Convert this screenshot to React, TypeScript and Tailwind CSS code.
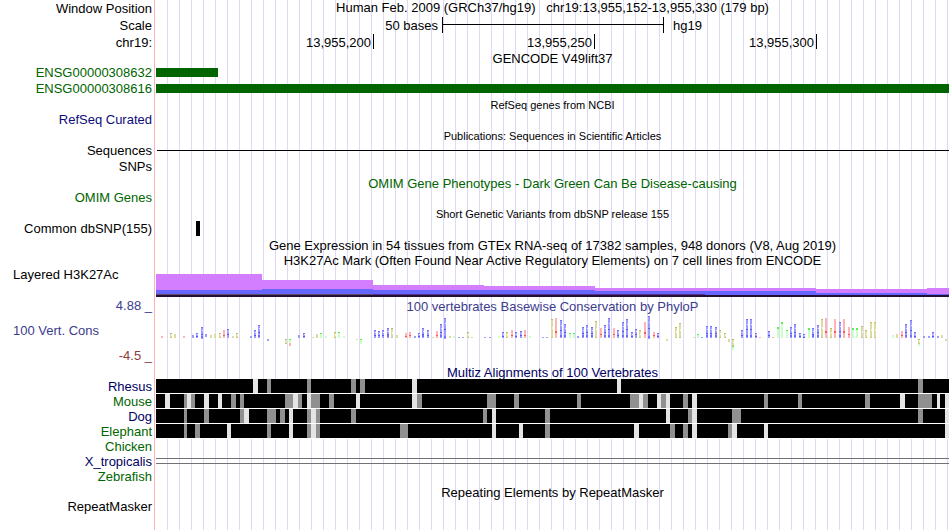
import type { ReactNode } from "react";

const GUIDES =
  "bg-[repeating-linear-gradient(90deg,transparent_0_11px,#dedaf6_11px_12px)]";

// Tracks are plotted in a coordinate space running from ORIGIN to ORIGIN + SPAN.
const ORIGIN = 156;
const SPAN = 793;

type RowProps = {
  height: string;
  label?: ReactNode;
  color?: string;
  align?: string;
  children?: ReactNode;
};

// Alignment of labels in the compact gene and variant tracks.
const RAISED = "pb-0.5";

function Row({ height, label, color = "text-black", align = "", children }: RowProps) {
  return (
    <div className={`flex ${height}`}>
      <div
        className={`mr-px flex w-[155px] shrink-0 flex-col justify-center border-r border-[#ffb4b4] pr-0.5 text-right ${align} ${color}`}
      >
        {label}
      </div>
      <div className={`min-w-0 flex-1 ${GUIDES}`}>{children}</div>
    </div>
  );
}

function Title({ children, className = "text-black" }: { children: ReactNode; className?: string }) {
  return (
    <h2 className={`flex h-full items-center justify-center whitespace-pre ${className}`}>
      {children}
    </h2>
  );
}

function SmallTitle({ children }: { children: ReactNode }) {
  return <Title className="pt-0.5 text-[11px] text-black">{children}</Title>;
}

const pct = (n: number) => `${(n / SPAN) * 100}%`;

const TICKS = [
  { text: "13,955,200", width: 218 },
  { text: "13,955,250", width: 221 },
  { text: "13,955,300", width: 222 },
];

type Band = [number, number, number, number, string];

const PURPLE = "#d37dff";
const BLUE = "#6666ff";
const DARK = "#231034";
const H3K27AC: Band[] = [
  [156, 274, 262, 290, PURPLE],
  [156, 290, 262, 294, BLUE],
  [262, 280, 373, 289, PURPLE],
  [262, 289, 373, 294, BLUE],
  [373, 285, 484, 290, PURPLE],
  [373, 290, 484, 294, BLUE],
  [484, 286, 595, 290, PURPLE],
  [484, 290, 595, 294, BLUE],
  [595, 288, 816, 291, PURPLE],
  [595, 291, 816, 295, BLUE],
  [816, 289, 927, 293, PURPLE],
  [816, 293, 927, 295, BLUE],
  [927, 288, 949, 294, PURPLE],
  [927, 294, 949, 295, BLUE],
  [156, 294, 373, 295, "#5c4a68"],
  [373, 294, 705, 295, "#58309c"],
  [156, 295, 949, 297, DARK],
];

// Conservation columns: base, x, top and optional bottom.
const CONS =
  "A161,336 C170,333 C174,334 A183,336 G192,335 G196,333 G201,327,339 G205,334,337 C210,335 C214,334 C219,333 A223,330 G227,329 C232,336 C236,333 G250,336 G254,330 G258,325 G267,339,341 C285,339,344 T289,339,343 A289,343,346 G298,335 G303,333 C312,337 C316,334 T320,333 T325,336 C334,332 T338,332 T343,336 C356,339,340 T360,339,344 " +
  "G374,330 G378,331 G382,330 G387,328 C391,328 C396,335 A405,333 A409,332 G414,336 G418,333 G422,328 G427,330 C432,337 A436,331 G440,324 G444,318,339 C449,336 T453,336 G458,337 G462,337 C467,332 C471,337 G484,337 G489,337 T498,336 G502,332 C506,332 A511,330 G515,332 G520,331 A524,330 T529,336 G542,337 G546,337 " +
  "C551,319 A555,318 G560,320 G564,324 T569,333 T573,333 G577,336 G582,327 G586,325 G591,327 C595,321 A600,328 G604,325 G608,318 A613,328 G617,330 G622,322 G626,319 G631,332 G635,329 C639,330 A644,322 G648,316,339 A653,332 G657,333 C666,339,341 C675,327 C679,323 C693,337 T697,334 G701,337 G706,326 G710,326 G715,327 C719,330 C724,333 C728,339,342 C732,339,346 T732,346,350 G741,330 G746,319 " +
  "G750,319 G755,333 A759,337 G768,331 A772,337 T777,327 T781,322 T786,330 G790,327 G794,324 G799,333 G803,334 T808,328 G812,328 G817,325 C821,319 A825,318 C830,328 A834,319 G839,322 A843,319 A848,327 T852,328 T856,328 C861,326 C865,330 C870,322 C874,322 T892,335 C896,334 A901,331 G905,324 G910,320 G914,332 C918,339,344 T918,344,346 G923,336 G928,336 G932,332 G937,336 C941,335 C945,339,341";

const COLUMNS = CONS.split(" ").map((entry) => {
  const [x, top, bottom = 338] = entry.slice(1).split(",").map(Number);
  return { base: entry[0], x, top, height: bottom - top };
});

function Column({ base, x, top, height }: { base: string; x: number; top: number; height: number }) {
  const mid = top + Math.floor(height / 2);
  if (base === "A") {
    return (
      <g>
        <rect x={x} y={top} width={2} height={height} fill="#ffb3b3" />
        {height > 4 && (
          <rect x={x} y={top + Math.floor(height * 0.65)} width={2} height={height > 12 ? 2 : 1} fill="#ff5555" />
        )}
      </g>
    );
  }
  if (base === "T") {
    return (
      <g>
        <rect x={x} y={top} width={2} height={height} fill="#c9ffc9" />
        {height > 3 && <rect x={x} y={top} width={2} height={height > 9 ? 2 : 1} fill="#55f055" />}
      </g>
    );
  }
  if (base === "C") {
    return (
      <g>
        <rect x={x} y={top} width={2} height={height} fill="#dcdca0" />
        {height > 4 && <rect x={x} y={top} width={2} height={1} fill="#bcbc60" />}
        {height > 4 && <rect x={x + 1} y={mid - 1} width={1} height={2} fill="#f6f6e6" />}
        {height > 4 && <rect x={x} y={top + height - 1} width={2} height={1} fill="#c8c878" />}
      </g>
    );
  }
  return (
    <g>
      <rect x={x} y={top} width={2} height={height} fill="#9d9dff" />
      {height > 3 && <rect x={x} y={top} width={2} height={1} fill="#7474fa" />}
      {height > 3 && <rect x={x + 1} y={top + Math.round(height / 4)} width={1} height={1} fill="#e6e6ff" />}
      {height > 3 && <rect x={x} y={mid + 1} width={2} height={1} fill="#5959f5" />}
      {height > 9 && <rect x={x} y={top + height - 3} width={2} height={2} fill="#7070fa" />}
    </g>
  );
}

type Species = { name: string; color: string; gray: string; light: string };

const GREEN = "text-[#006400]";
const NAVY = "text-[#000064]";

const SPECIES: Species[] = [
  {
    name: "Rhesus",
    color: NAVY,
    gray: "267-271 307-311 351-356 360-365 918-923",
    light: "253-258 412-417 617-621",
  },
  {
    name: "Mouse",
    color: GREEN,
    gray: "184-187 191-195 231-236 240-244 285-293 298-302 311-320 329-334 417-422 487-496 514-519 577-581 630-639 643-648 661-666 683-688 764-768 798-802 865-870 918-932",
    light: "165-170 187-191 204-209 218-222 293-298 307-311 356-360 412-417 639-643 657-661 666-670 692-697 900-905 937-940 945-949",
  },
  {
    name: "Dog",
    color: NAVY,
    gray: "184-187 204-209 240-244 267-276 280-285 307-311 316-320 351-356 483-487 545-550 688-692 732-741 918-923",
    light: "244-249 289-293 311-316 492-496 666-670 692-697 945-949",
  },
  {
    name: "Elephant",
    color: GREEN,
    gray: "184-187 195-200 267-271 307-311 316-320 400-408 545-550 670-675 683-688 728-732",
    light: "227-231 289-293 311-316 492-496 519-523 634-639 692-697 732-737 764-768 945-949",
  },
];

function Blocks({ ranges, fill }: { ranges: string; fill: string }) {
  return (
    <>
      {ranges.split(" ").map((range) => {
        const [from, to] = range.split("-").map(Number);
        return <rect key={range} x={from} y={0} width={to - from} height={14} fill={fill} />;
      })}
    </>
  );
}

export default function App() {
  return (
    <main className="min-h-screen overflow-hidden bg-white pr-px font-['Liberation_Sans',Arial,sans-serif] text-[13px] leading-[15px]">
      <Row height="h-[17px]" label="Window Position">
        <h1 className="flex h-[15px] items-center justify-center whitespace-pre">
          {"Human Feb. 2009 (GRCh37/hg19)   chr19:13,955,152-13,955,330 (179 bp)"}
        </h1>
      </Row>
      <Row height="h-[17px]" label="Scale">
        <div className="flex h-4 items-center">
          <span className="pr-1 text-right" style={{ width: pct(286) }}>
            50 bases
          </span>
          <span
            className="flex h-4 flex-col border-x border-black pt-[7px]"
            style={{ width: pct(222) }}
          >
            <span className="h-px bg-black" />
          </span>
          <span className="pl-[9px]">hg19</span>
        </div>
      </Row>
      <Row height="h-[17px]" label="chr19:">
        <div className="flex">
          {TICKS.map((tick) => (
            <span
              key={tick.text}
              className="h-[15px] border-r border-black pr-0.5 text-right leading-[17px]"
              style={{ width: pct(tick.width) }}
            >
              {tick.text}
            </span>
          ))}
        </div>
      </Row>
      <Row height="h-[14px]">
        <Title>GENCODE V49lift37</Title>
      </Row>
      <Row height="h-4" label="ENSG00000308632" color={GREEN} align={RAISED}>
        <div className="flex h-full items-center pb-px">
          <div className="h-[9px] bg-[#006400]" style={{ width: pct(62) }} />
        </div>
      </Row>
      <Row height="h-4" label="ENSG00000308616" color={GREEN} align={RAISED}>
        <div className="flex h-full items-center pb-px">
          <div className="h-[9px] w-full bg-[#006400]" />
        </div>
      </Row>
      <Row height="h-[15px]">
        <SmallTitle>RefSeq genes from NCBI</SmallTitle>
      </Row>
      <Row height="h-4" label="RefSeq Curated" color="text-[#0c0c78]" align={RAISED} />
      <Row height="h-[15px]">
        <SmallTitle>Publications: Sequences in Scientific Articles</SmallTitle>
      </Row>
      <Row height="h-4" label="Sequences" align={RAISED}>
        <div className="ml-px h-2 border-b border-black" />
      </Row>
      <Row height="h-4" label="SNPs" align={RAISED} />
      <Row height="h-4">
        <Title className={GREEN}>OMIM Gene Phenotypes - Dark Green Can Be Disease-causing</Title>
      </Row>
      <Row height="h-[15px]" label="OMIM Genes" color={GREEN} align={RAISED} />
      <Row height="h-[15px]">
        <SmallTitle>Short Genetic Variants from dbSNP release 155</SmallTitle>
      </Row>
      <Row height="h-4" label="Common dbSNP(155)" align={RAISED}>
        <div className="flex">
          <div style={{ width: pct(40) }} />
          <div className="h-[15px] w-1 bg-black" />
        </div>
      </Row>
      <Row height="h-4">
        <Title>
          Gene Expression in 54 tissues from GTEx RNA-seq of 17382 samples, 948 donors (V8, Aug 2019)
        </Title>
      </Row>
      <Row height="h-[15px]">
        <Title>H3K27Ac Mark (Often Found Near Active Regulatory Elements) on 7 cell lines from ENCODE</Title>
      </Row>
      <Row
        height="h-[30px]"
        align={RAISED}
        label={<span className="h-full pl-[13px] text-left leading-[14px]">Layered H3K27Ac</span>}
      >
        <svg
          className="block h-[30px] w-full"
          viewBox={`${ORIGIN} 268 ${SPAN} 30`}
          preserveAspectRatio="none"
          shapeRendering="crispEdges"
          role="img"
          aria-label="H3K27Ac signal"
        >
          {H3K27AC.map(([x1, y1, x2, y2, fill], i) => (
            <rect key={i} x={x1} y={y1} width={x2 - x1} height={y2 - y1} fill={fill} />
          ))}
        </svg>
      </Row>
      <Row
        height="h-[67px]"
        align={RAISED}
        label={
          <span className="flex h-full flex-col justify-between text-[#3c3c8c]">
            <span>4.88 _</span>
            <span className="pl-[13px] text-left">100 Vert. Cons</span>
            <span className="text-[#8c3c3c]">-4.5 _</span>
          </span>
        }
      >
        <div className="flex h-[17px]">
          <h2 className="w-full text-center leading-[17px] text-[#3c3c8c]">
            100 vertebrates Basewise Conservation by PhyloP
          </h2>
        </div>
        <svg
          className="block h-[50px] w-full"
          viewBox={`${ORIGIN} 315 ${SPAN} 50`}
          preserveAspectRatio="none"
          shapeRendering="crispEdges"
          role="img"
          aria-label="PhyloP conservation scores"
        >
          {COLUMNS.map((column, i) => (
            <Column key={i} {...column} />
          ))}
        </svg>
      </Row>
      <Row height="h-[14px]">
        <Title className={NAVY}>Multiz Alignments of 100 Vertebrates</Title>
      </Row>
      {SPECIES.map((species) => (
        <Row key={species.name} height="h-[15px]" label={species.name} color={species.color}>
          <div className="bg-white pb-px">
            <svg
              className="block h-[14px] w-full bg-black"
              viewBox={`${ORIGIN} 0 ${SPAN} 14`}
              preserveAspectRatio="none"
              shapeRendering="crispEdges"
              role="img"
              aria-label={`${species.name} alignment`}
            >
              <Blocks ranges={species.gray} fill="#909090" />
              <Blocks ranges={species.light} fill="#e4e4e4" />
            </svg>
          </div>
        </Row>
      ))}
      <Row height="h-[15px]" label="Chicken" color={GREEN} />
      <Row height="h-[15px]" label="X_tropicalis" color={NAVY}>
        <div className="pt-1">
          <div className="h-1.5 border-y border-[#737078]" />
        </div>
      </Row>
      <Row height="h-[15px]" label="Zebrafish" color={GREEN} />
      <Row height="h-4">
        <Title>Repeating Elements by RepeatMasker</Title>
      </Row>
      <Row height="h-[15px]" label="RepeatMasker" align={RAISED} />
      <Row height="h-[15px]" />
    </main>
  );
}
